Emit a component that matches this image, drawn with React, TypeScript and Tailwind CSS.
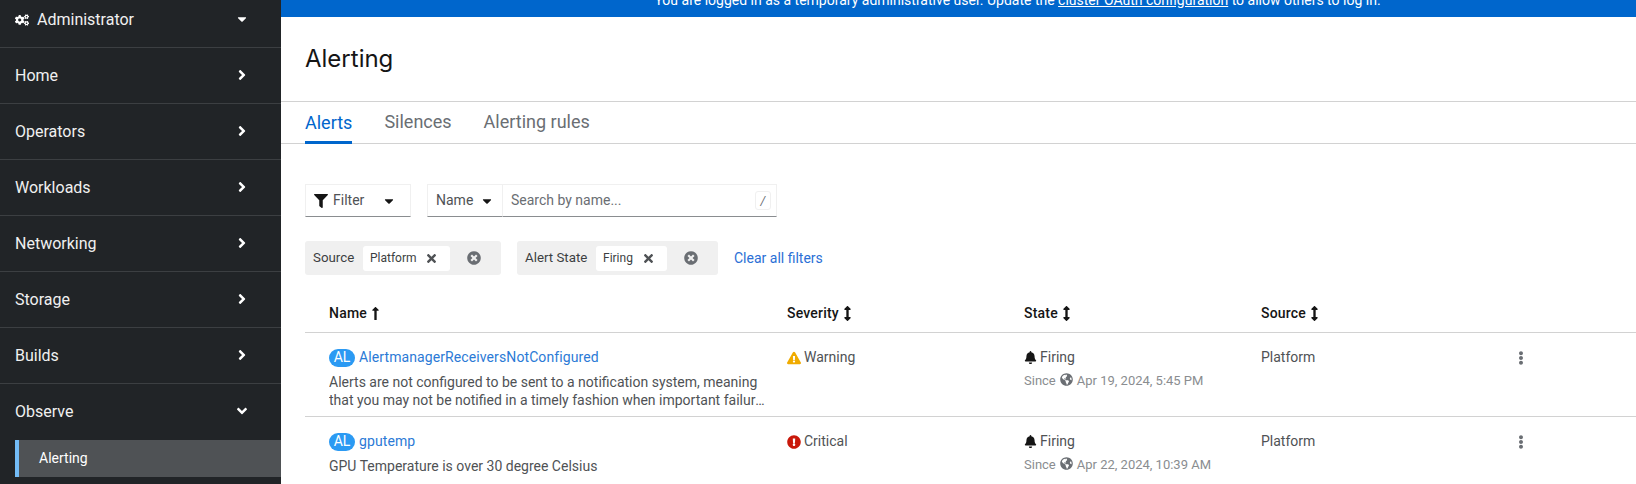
import React from "react";
import {
  FaCogs, FaCaretDown, FaAngleRight, FaAngleDown, FaFilter, FaTimes, FaTimesCircle,
  FaLongArrowAltUp, FaArrowsAltV, FaExclamationTriangle, FaExclamationCircle, FaBell,
  FaGlobeAmericas, FaEllipsisV,
} from "react-icons/fa";

const font = { fontFamily: "Roboto, 'Noto Sans', sans-serif" };

function NavItem({ label }: { label: string }) {
  return (
    <div className="flex h-[56px] shrink-0 items-center justify-between border-b border-[#3c3f42] pb-[2px] pl-[15px] pr-[31px] text-[16px] text-[#f0f0f0]">
      <span className="mt-[2px]">{label}</span>
      <FaAngleRight className="text-[16px] text-white" />
    </div>
  );
}

function Sidebar() {
  return (
    <aside className="flex h-[484px] w-[281px] shrink-0 flex-col overflow-hidden bg-[#212427]">
      <div className="flex h-[48px] shrink-0 items-center justify-between border-b border-[#3c3f42] pb-[10px] pl-[15px] pr-[32px] text-[16px] text-[#f0f0f0]">
        <span className="mt-[2px] flex items-center gap-[8px]"><FaCogs className="text-[14px] text-white" />Administrator</span>
        <FaCaretDown className="text-[14px] text-white" />
      </div>
      {["Home", "Operators", "Workloads", "Networking", "Storage", "Builds"].map((l) => (
        <NavItem key={l} label={l} />
      ))}
      <div className="flex h-[56px] shrink-0 items-center justify-between pb-[2px] pl-[15px] pr-[31px] text-[16px] text-[#f0f0f0]">
        <span className="mt-[2px]">Observe</span>
        <FaAngleDown className="text-[16px] text-white" />
      </div>
      <div className="ml-[15px] flex h-[37px] shrink-0 items-center border-l-[4px] border-[#73bcf7] bg-[#4f5255] pl-[20px] text-[14px] text-white">Alerting</div>
    </aside>
  );
}

function Chip({ group, value, w, gw, gl }: { group: string; value: string; w: string; gw: string; gl: string }) {
  return (
    <div className={`flex h-[34px] items-center rounded-[3px] bg-[#f0f0f0] pl-[8px] text-[13.3px] text-[#3c3f42] ${gw}`}>
      <span className={gl}>{group}</span>
      <span className={`flex h-[25px] items-center justify-between rounded-[3px] bg-white pl-[7px] pr-[12px] text-[12px] text-[#3c3f42] ${w}`}>
        {value}
        <FaTimes className="text-[13px] text-[#4f5255]" />
      </span>
      <FaTimesCircle className="ml-[17px] text-[14px] text-[#6a6e73]" />
    </div>
  );
}

function Sort({ up }: { up?: boolean }) {
  return up ? (
    <FaLongArrowAltUp className="text-[15px] text-[#151515]" />
  ) : (
    <FaArrowsAltV className="text-[15px] text-[#151515]" />
  );
}

function Row({ name, lines, sev, since, h }: { name: string; lines: string[]; sev: "w" | "c"; since: string; h: string }) {
  return (
    <div className={`grid grid-cols-[458px_237px_237px_253px_1fr] border-b border-[#d2d2d2] pl-[24px] pt-[14px] text-[14px] leading-[21px] text-[#4f5255] ${h}`}>
      <div className="pr-[20px]">
        <div className="flex items-center gap-[4px]">
          <span className="flex h-[18px] w-[26px] items-center justify-center rounded-full bg-[#2b9af3] text-[14px] text-white">AL</span>
          <span className="tracking-[0.1px] text-[#2b7ad6]">{name}</span>
        </div>
        <div className="mt-[5px] w-[436px] text-[14px] leading-[18px] text-[#4f5255]">
          {lines.map((l) => (
            <div key={l} className="truncate">{l}</div>
          ))}
        </div>
      </div>
      <div className="flex h-[21px] items-center gap-[2px]">
        {sev === "w" ? <FaExclamationTriangle className="text-[14px] text-[#f0ab00]" /> : <FaExclamationCircle className="text-[14px] text-[#c9190b]" />}
        <span className="ml-[1px]">{sev === "w" ? "Warning" : "Critical"}</span>
      </div>
      <div>
        <div className="flex h-[21px] items-center gap-[3px]"><FaBell className="text-[13px] text-[#151515]" /><span>Firing</span></div>
        <div className="mt-[2px] flex items-center gap-[4px] text-[13px] text-[#8a8d90]">Since <FaGlobeAmericas className="mb-[3px] text-[13px] text-[#6a6e73]" /> {since}</div>
      </div>
      <div>Platform</div>
      <div className="flex h-[21px] items-center"><FaEllipsisV className="text-[14px] text-[#6a6e73]" /></div>
    </div>
  );
}

export default function App() {
  return (
    <div className="flex h-[484px] w-[1636px] overflow-hidden bg-white" style={font}>
      <Sidebar />
      <main className="flex min-w-0 flex-1 flex-col">
        <div className="flex h-[17px] shrink-0 items-end justify-center overflow-hidden bg-[#0066cc] pb-[6px] pl-[118px] text-[14px] leading-[21px] text-white whitespace-nowrap">
          <span>You are logged in as a temporary administrative user. Update the <u>cluster OAuth configuration</u> to allow others to log in.</span>
        </div>
        <div className="flex h-[85px] shrink-0 items-center border-b border-[#d2d2d2] pl-[24px] font-['Inter'] text-[24px] text-[#151515]">Alerting</div>
        <div className="flex h-[42px] shrink-0 items-stretch gap-[32px] border-b border-[#d2d2d2] pl-[24px] text-[18px] text-[#6a6e73]">
          <span className="mb-[-1px] flex items-center border-b-[3px] border-[#0066cc] pt-[1px] text-[#0066cc]">Alerts</span>
          <span className="flex items-center pb-[2px]">Silences</span>
          <span className="flex items-center pb-[2px]">Alerting rules</span>
        </div>
        <div className="ml-[24px] mt-[40px] flex h-[33px] shrink-0 items-stretch text-[14px] text-[#4f5255]">
          <div className="flex w-[106px] items-center border border-[#f0f0f0] border-b-[#8a8d90] pl-[8px]">
            <FaFilter className="text-[14px] text-[#151515]" />
            <span className="ml-[5px]">Filter</span>
            <FaCaretDown className="ml-[18px] text-[14px] text-[#151515]" />
          </div>
          <div className="ml-[16px] flex w-[76px] items-center justify-between border border-[#f0f0f0] border-b-[#8a8d90] pl-[8px] pr-[8px]">
            <span>Name</span><FaCaretDown className="text-[14px] text-[#151515]" />
          </div>
          <div className="flex w-[274px] items-center justify-between border-y border-r border-[#f0f0f0] border-b-[#8a8d90] pl-[8px] pr-[5px] text-[#6a6e73]">
            <span>Search by name...</span>
            <span className="flex h-[19px] w-[16px] items-center justify-center rounded-[3px] border border-[#f0f0f0] text-[12px] italic">/</span>
          </div>
        </div>
        <div className="ml-[24px] mt-[24px] flex shrink-0 items-center text-[14px]">
          <Chip group="Source" value="Platform" w="w-[87px]" gw="w-[196px]" gl="w-[50px]" />
          <div className="w-[16px]" />
          <Chip group="Alert State" value="Firing" w="w-[71px]" gw="w-[201px]" gl="w-[71px]" />
          <span className="ml-[16px] text-[#2b6fd6]">Clear all filters</span>
        </div>
        <div className="ml-[24px] mt-[28px] grid h-[30px] shrink-0 grid-cols-[458px_237px_237px_1fr] items-start border-b border-[#d2d2d2] pl-[24px] text-[14px] font-medium tracking-[0.2px] text-[#151515]">
          <span className="flex items-center gap-[1px]">Name<Sort up /></span>
          <span className="flex items-center gap-[1px]">Severity<Sort /></span>
          <span className="flex items-center gap-[1px]">State<Sort /></span>
          <span className="flex items-center gap-[1px]">Source<Sort /></span>
        </div>
        <div className="ml-[24px]">
          <Row h="h-[84px]" name="AlertmanagerReceiversNotConfigured" sev="w" since="Apr 19, 2024, 5:45 PM"
            lines={["Alerts are not configured to be sent to a notification system, meaning", "that you may not be notified in a timely fashion when important failures occur. Check the OpenShift documentation to learn how to configure notifications with Alertmanager."]} />
          <Row h="h-[84px]" name="gputemp" sev="c" since="Apr 22, 2024, 10:39 AM" lines={["GPU Temperature is over 30 degree Celsius"]} />
        </div>
      </main>
    </div>
  );
}
